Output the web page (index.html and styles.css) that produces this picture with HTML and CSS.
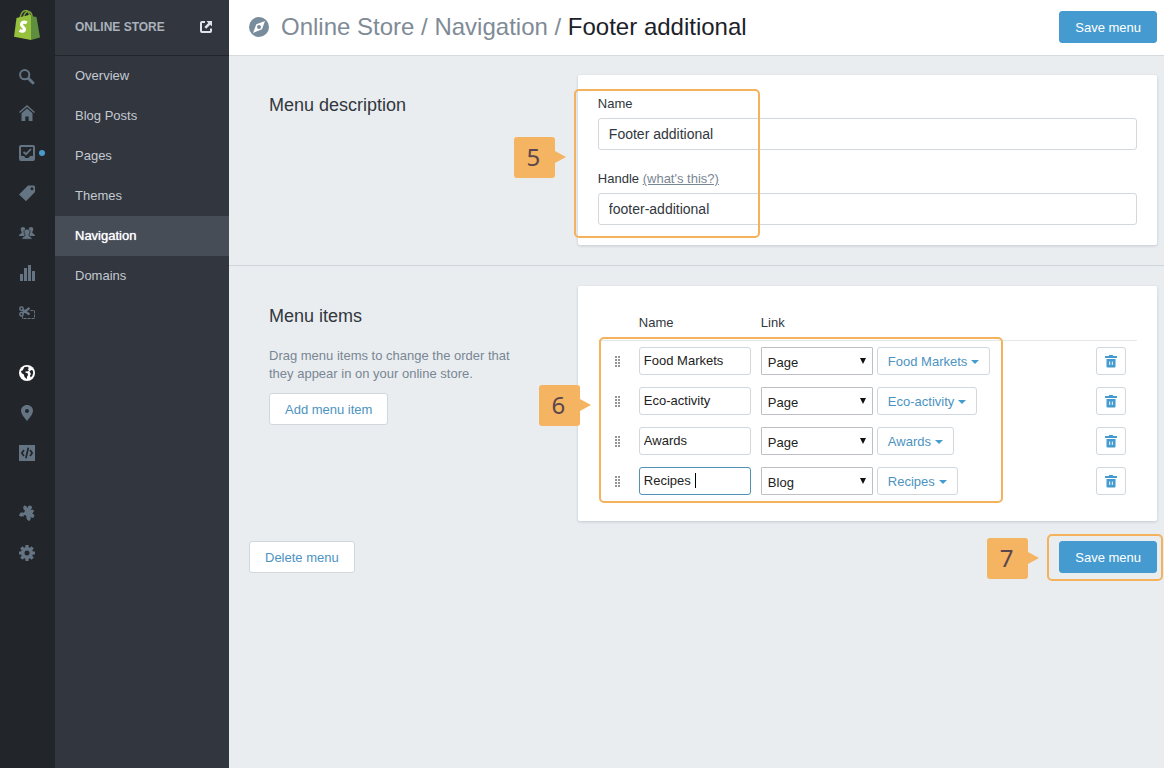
FILE: index.html
```html
<!DOCTYPE html>
<html lang="en">
<head>
<meta charset="utf-8">
<title>Footer additional - Navigation</title>
<link rel="stylesheet" href="styles.css">
</head>
<body>
<svg class="sprites" aria-hidden="true">
  <symbol id="icon-grip" viewBox="0 0 5 11"><path d="M0 0h2v2H0zM3 0h2v2H3zM0 3h2v2H0zM3 3h2v2H3zM0 6h2v2H0zM3 6h2v2H3zM0 9h2v2H0zM3 9h2v2H3z"/></symbol>
  <symbol id="icon-trash" viewBox="0 0 12 13"><path d="M0 1h4V0h4v1h4v2H0zM1.500 4h9v7.500a1 1 0 0 1-1 1h-7a1 1 0 0 1-1-1z"/><path d="M4 6.500h1.200V10H4zM6.800 6.500H8V10H6.800z" fill="#d3e8f5"/></symbol>
</svg>
<div class="app">
  <nav class="rail" aria-label="Main">
    <a class="logo" href="#" aria-label="Home page">
      <svg width="28" height="32" viewBox="0 0 28 32">
        <path d="M7 9C8 4 10.500 1.500 13 1.500c2.500 0 3.500 2.500 3.500 7M10.500 8c1-4 3-5.500 5-5.500S19 5 19 7" fill="none" stroke="#7fa83c" stroke-width="1.400"/>
        <path d="M3.500 9 18 5.500v25.500L1 27.800z" fill="#95c13d"/>
        <path d="M18 5.500l2.500 2 3 .6L27 28.500 18 31z" fill="#5f8e3e"/>
        <path d="M13.800 13.800c-3-1.600-5.300-.5-5.300 1.700 0 2.500 3.300 2.800 3 5-.3 2-2.500 2.200-5 .8" fill="none" stroke="#fff" stroke-width="3.200"/>
      </svg>
    </a>
    <a class="rail-item rail-item-search" href="#" aria-label="Search">
      <svg class="icon" viewBox="0 0 16 16"><circle cx="5.700" cy="5.700" r="4.600" fill="none" stroke="currentColor" stroke-width="2"/><path d="M9 9l5.800 5.800" stroke="currentColor" stroke-width="3"/></svg>
    </a>
    <a class="rail-item" href="#" aria-label="Home">
      <svg class="icon" viewBox="0 0 16 16"><path d="M.5 7.500 8 1l7.500 6.500" fill="none" stroke="currentColor" stroke-width="1.500"/><path d="M2.500 8.300 8 3.600l5.500 4.700V16H9.700v-4.500H6.300V16H2.500z" fill="currentColor"/></svg>
    </a>
    <a class="rail-item" href="#" aria-label="Orders">
      <svg class="icon" viewBox="0 0 16 16"><rect x="1" y="1" width="14" height="14" rx="1" fill="none" stroke="currentColor" stroke-width="2"/><path d="M1 11h4l1.500 2h3L11 11h4v4H1z" fill="currentColor"/><path d="M4.500 7 7 9.200 12 4" fill="none" stroke="currentColor" stroke-width="1.800"/></svg>
      <span class="dot"></span>
    </a>
    <a class="rail-item" href="#" aria-label="Products">
      <svg class="icon" viewBox="0 0 16 16"><path fill-rule="evenodd" d="M9 .5h6l1 1v5.500L7 16.200 0 9.500zM13 2.300a1.500 1.500 0 1 0 0 3 1.500 1.500 0 0 0 0-3z" fill="currentColor"/></svg>
    </a>
    <a class="rail-item" href="#" aria-label="Customers">
      <svg class="icon" viewBox="0 0 16 16"><path d="M1.700 4c0-2.700 4.600-2.700 4.600 0 0 1.500-1 2-.8 3.300L7 9.500 5 11H0c0-2.500 2.700-2 2.700-3.500 0-1.200-1-2-1-3.500zM9.700 4c0-2.700 4.600-2.700 4.600 0 0 1.500-1 2.300-1 3.500 0 1.500 2.700 1 2.700 3.500h-5L9 9.500l1.500-2.200C10.700 6 9.700 5.500 9.700 4z" fill="currentColor"/><path d="M5 6.500c0-3.300 6-3.300 6 0 0 1.700-1.200 2.500-1 4 .3 1.300 3.300 1 3.300 3.800H2.700c0-2.800 3-2.500 3.300-3.800.2-1.500-1-2.300-1-4z" fill="currentColor" stroke="#22252a" stroke-width=".8"/></svg>
    </a>
    <a class="rail-item" href="#" aria-label="Reports">
      <svg class="icon" viewBox="0 0 16 16"><path d="M1 9h3v7H1zM5 3h3v13H5zM9 0h3v16H9zM13 6h3v10h-3z" fill="currentColor"/></svg>
    </a>
    <a class="rail-item" href="#" aria-label="Discounts">
      <svg class="icon" viewBox="0 0 16 16"><g fill="none" stroke="currentColor"><circle cx="2.500" cy="3.800" r="1.700" stroke-width="1.500"/><circle cx="2.500" cy="9.200" r="1.700" stroke-width="1.500"/><path d="M3.500 4.800 10.500 9.500M3.500 8.200l7-5.200" stroke-width="2.300"/><path d="M11.500 5.500h4v8h-12V11" stroke-dasharray="3 1"/></g></svg>
    </a>
    <a class="rail-item rail-item-active rail-group" href="#" aria-label="Online store">
      <svg class="icon" viewBox="0 0 16 16"><circle cx="8" cy="8" r="8" fill="currentColor"/><path d="M5.500 2 9 1.700l.8 1.500L8.700 4.200l1.500 1-2 1.300-1.400-.2-.6 1.200 2.300.8.700 1.700-1 1.300-.5 2.700L5.500 12 4.800 9.500 2.500 8 2 6l1.500-.5zM10.500 6.500l1.700-1.500 1.600.5.400 2.500-1 3-1.700 1.500-.5-2.200 1-1.300z" fill="#22252a"/></svg>
    </a>
    <a class="rail-item" href="#" aria-label="Locations">
      <svg class="icon" viewBox="0 0 16 16"><path fill-rule="evenodd" d="M8 0c3.500 0 6 2.500 6 5.800C14 9 11 12.500 8 16 5 12.500 2 9 2 5.800 2 2.500 4.500 0 8 0zm0 4a2 2 0 1 0 0 4 2 2 0 0 0 0-4z" fill="currentColor"/></svg>
    </a>
    <a class="rail-item" href="#" aria-label="Code">
      <svg class="icon" viewBox="0 0 16 16"><path d="M0 0h16v16H0z" fill="currentColor"/><path d="M5 5 2.800 8 5 11M11 5l2.200 3L11 11M9.300 2.700l-2.400 10.600" fill="none" stroke="#22252a" stroke-width="1.700"/></svg>
    </a>
    <a class="rail-item rail-group" href="#" aria-label="Apps">
      <svg class="icon" viewBox="0 0 16 16"><g transform="rotate(28 8 8)"><path d="M3 3h10v10H3z" fill="currentColor"/><circle cx="8" cy="1.800" r="2" fill="currentColor"/><circle cx="14" cy="8" r="2" fill="currentColor"/><circle cx="3.700" cy="8" r="1.600" fill="#22252a"/><circle cx="8" cy="12.300" r="1.600" fill="#22252a"/><path d="M2 2.500h3v3H2zM11 2.500h2v3h-2zM2 10.500h3v3.500H2zM11 10.500h3v3.500h-3z" fill="currentColor"/></g></svg>
    </a>
    <a class="rail-item" href="#" aria-label="Settings">
      <svg class="icon" viewBox="0 0 16 16"><circle cx="8" cy="8" r="4.300" fill="none" stroke="currentColor" stroke-width="3.600"/><g stroke="currentColor" stroke-width="3.200"><path d="M8 0v3M8 13v3M0 8h3M13 8h3M2.300 2.300l2.200 2.200M11.500 11.500l2.200 2.200M2.300 13.700l2.200-2.200M11.500 4.500l2.200-2.200"/></g></svg>
    </a>
  </nav>

  <nav class="subnav" aria-label="Online store">
    <div class="subnav-head">
      <span>ONLINE STORE</span>
      <a class="external" href="#" aria-label="View online store">
        <svg width="12" height="12" viewBox="0 0 12 12"><path d="M5 1H2a1 1 0 0 0-1 1v8a1 1 0 0 0 1 1h8a1 1 0 0 0 1-1V7.500" fill="none" stroke="currentColor" stroke-width="2"/><path d="M6.500 0H12v5.500L10.200 3.700 6.200 7.700 4.400 5.900l3.900-4z" fill="currentColor"/></svg>
      </a>
    </div>
    <a class="subnav-item" href="#">Overview</a>
    <a class="subnav-item" href="#">Blog Posts</a>
    <a class="subnav-item" href="#">Pages</a>
    <a class="subnav-item" href="#">Themes</a>
    <a class="subnav-item subnav-item-active" href="#" aria-current="page">Navigation</a>
    <a class="subnav-item" href="#">Domains</a>
  </nav>

  <main class="main">
    <header class="topbar">
      <svg class="compass" width="20" height="20" viewBox="0 0 20 20"><circle cx="10" cy="10" r="10" fill="#798c9c"/><path d="M16 4l-3 8.300L4 16l3.300-8.800z" fill="#fff"/><circle cx="10" cy="10" r="2" fill="#798c9c"/></svg>
      <h1 class="crumbs"><a href="#">Online Store</a> / <a href="#">Navigation</a> / <span class="current">Footer additional</span></h1>
      <button class="button button-primary" type="button">Save menu</button>
    </header>

    <section class="section section-ruled">
      <div class="intro">
        <h2>Menu description</h2>
      </div>
      <div class="card">
        <div class="field">
          <label for="menu-name">Name</label>
          <input class="text-input" id="menu-name" type="text" value="Footer additional">
        </div>
        <div class="field">
          <div class="label-row"><label for="menu-handle">Handle</label> <a class="help" href="#">(what's this?)</a></div>
          <input class="text-input" id="menu-handle" type="text" value="footer-additional">
        </div>
        <div class="mark mark-description"><span class="badge">5</span></div>
      </div>
    </section>

    <section class="section">
      <div class="intro">
        <h2>Menu items</h2>
        <p>Drag menu items to change the order that they appear in on your online store.</p>
        <button class="button" type="button">Add menu item</button>
      </div>
      <div class="card">
        <table class="items">
          <thead>
            <tr><th class="col-grip"></th><th class="col-name">Name</th><th>Link</th><th class="col-delete"></th></tr>
          </thead>
          <tbody>
            <tr>
              <td><svg class="grip"><use href="#icon-grip"/></svg></td>
              <td><input class="item-input" type="text" aria-label="Item 1 name" value="Food Markets"></td>
              <td><div class="link-cell"><span class="select"><select aria-label="Item 1 link type"><option>Page</option><option>Blog</option></select></span><button class="picker" type="button">Food Markets<span class="caret"></span></button></div></td>
              <td><button class="delete" type="button" aria-label="Delete Food Markets"><svg class="trash"><use href="#icon-trash"/></svg></button></td>
            </tr>
            <tr>
              <td><svg class="grip"><use href="#icon-grip"/></svg></td>
              <td><input class="item-input" type="text" aria-label="Item 2 name" value="Eco-activity"></td>
              <td><div class="link-cell"><span class="select"><select aria-label="Item 2 link type"><option>Page</option><option>Blog</option></select></span><button class="picker" type="button">Eco-activity<span class="caret"></span></button></div></td>
              <td><button class="delete" type="button" aria-label="Delete Eco-activity"><svg class="trash"><use href="#icon-trash"/></svg></button></td>
            </tr>
            <tr>
              <td><svg class="grip"><use href="#icon-grip"/></svg></td>
              <td><input class="item-input" type="text" aria-label="Item 3 name" value="Awards"></td>
              <td><div class="link-cell"><span class="select"><select aria-label="Item 3 link type"><option>Page</option><option>Blog</option></select></span><button class="picker" type="button">Awards<span class="caret"></span></button></div></td>
              <td><button class="delete" type="button" aria-label="Delete Awards"><svg class="trash"><use href="#icon-trash"/></svg></button></td>
            </tr>
            <tr>
              <td><svg class="grip"><use href="#icon-grip"/></svg></td>
              <td><div class="editing"><input class="item-input item-input-active" type="text" aria-label="Item 4 name" value="Recipes "><span class="text-cursor"></span></div></td>
              <td><div class="link-cell"><span class="select"><select aria-label="Item 4 link type"><option>Page</option><option selected>Blog</option></select></span><button class="picker" type="button">Recipes<span class="caret"></span></button></div></td>
              <td><button class="delete" type="button" aria-label="Delete Recipes"><svg class="trash"><use href="#icon-trash"/></svg></button></td>
            </tr>
          </tbody>
        </table>
        <div class="mark mark-items"><span class="badge">6</span></div>
      </div>
    </section>

    <footer class="actions">
      <button class="button" type="button">Delete menu</button>
      <div class="save">
        <button class="button button-primary" type="button">Save menu</button>
        <div class="mark mark-save"><span class="badge">7</span></div>
      </div>
    </footer>
  </main>
</div>
</body>
</html>
```
FILE: styles.css
```css
* { box-sizing: border-box; }

body {
  margin: 0;
  font: 13px/18px "Liberation Sans", Arial, sans-serif;
  color: #31373d;
  background: #e9edf0;
}

a { color: inherit; text-decoration: none; }
button, input, select { font: inherit; margin: 0; }
h1, h2, p { margin: 0; font-weight: normal; }

.sprites { position: absolute; width: 0; height: 0; }
.app { display: flex; min-height: 100vh; }

/* Icon rail */
.rail {
  flex: none;
  width: 55px;
  background: linear-gradient(to right, #22252a 44px, #20252d);
}
.logo { display: flex; justify-content: center; height: 59px; padding: 9px 1px 0 0; }
.rail-item {
  position: relative;
  display: flex;
  align-items: center;
  justify-content: center;
  height: 40px;
  padding-right: 1px;
  color: #647482;
}
.rail-item-search { height: 34px; padding-top: 2px; }
.rail-item-active { color: #fff; }
.rail-group { margin-top: 20px; }
.icon { width: 16px; height: 16px; }
.dot {
  position: absolute;
  top: 17px;
  left: 39px;
  width: 6px;
  height: 6px;
  border-radius: 50%;
  background: #479ccf;
}

/* Section menu */
.subnav { flex: none; width: 174px; background: #32363e; color: #c3cad2; }
.subnav-head {
  display: flex;
  align-items: center;
  justify-content: space-between;
  height: 56px;
  padding: 0 17px 2px 20px;
  border-bottom: 1px solid #22252b;
  font-size: 12px;
  font-weight: bold;
  color: #a9b2bb;
}
.external { display: flex; color: #dfe5ea; }
.subnav-item { display: block; padding: 11px 20px; }
.subnav-item-active {
  background: #464d57;
  color: #fff;
  text-shadow: 0 0 1px #fff;
}

/* Page */
.main { flex: 1; min-width: 0; }
.topbar {
  display: flex;
  align-items: center;
  gap: 12px;
  height: 56px;
  padding: 0 7px 2px 20px;
  background: #fff;
  border-bottom: 1px solid #d5dade;
}
.compass { flex: none; }
.crumbs { flex: 1; font-size: 24px; line-height: 30px; color: #7f8b96; }
.current { color: #1c2228; }

.section {
  display: grid;
  grid-template-columns: 8fr 15fr;
  padding: 20px 7px 20px 40px;
}
.section-ruled { padding-top: 19px; border-bottom: 1px solid #cfd5da; }
.intro { padding: 19px 60px 0 0; }
h2 { font-size: 18px; line-height: 22px; }
.intro p { margin: 20px 0 10px; color: #798693; }

.card {
  position: relative;
  padding: 20px;
  background: #fff;
  border-radius: 2px;
  box-shadow: 0 1px 3px rgba(50, 65, 80, .2);
}
.field + .field { margin-top: 20px; }
.field label { line-height: 18px; }
.help { color: #798693; text-decoration: underline; }
.text-input {
  display: block;
  width: 100%;
  height: 32px;
  margin-top: 5px;
  padding: 0 10px;
  border: 1px solid #d3d8dc;
  border-radius: 3px;
  font-size: 14px;
  color: #31373d;
}

.button {
  height: 32px;
  padding: 2px 15px 0;
  border: 1px solid #d0d7dd;
  border-radius: 3px;
  background: #fff;
  color: #4c93c2;
}
.button-primary { border-color: #459bcf; background: #459bcf; color: #fff; }

/* Menu item table */
.items { width: 100%; border-collapse: separate; border-spacing: 0; table-layout: fixed; }
.items th {
  height: 35px;
  padding: 0 0 1px;
  border-bottom: 1px solid #e4e8eb;
  font-weight: normal;
  text-align: left;
}
.items td { height: 40px; padding: 0; }
.col-grip { width: 41px; }
.col-name { width: 122px; }
.col-delete { width: 41px; }
.grip { display: block; width: 5px; height: 11px; margin-left: 17px; fill: #959595; }
.item-input {
  display: block;
  width: 112px;
  height: 28px;
  padding: 0 4px 2px;
  border: 1px solid #d0d7dd;
  border-radius: 3px;
  color: #222;
}
.item-input-active { border-color: #4f92b5; }
.editing { position: relative; }
.text-cursor {
  position: absolute;
  top: 6px;
  left: 56px;
  width: 1px;
  height: 15px;
  background: #000;
}
.link-cell { display: flex; gap: 4px; }
.select { position: relative; }
.select select {
  appearance: none;
  display: block;
  width: 112px;
  height: 28px;
  padding: 3px 20px 0 6px;
  border: 1px solid #bcc0c4;
  border-radius: 1px;
  background: #fff;
  color: #222;
}
.select::after {
  content: "";
  position: absolute;
  top: 11px;
  right: 7px;
  border: solid transparent;
  border-width: 6px 3px 0;
  border-top-color: #111;
  pointer-events: none;
}
.picker {
  display: flex;
  align-items: center;
  gap: 4px;
  height: 28px;
  padding: 1px 10px 0;
  border: 1px solid #d0d7dd;
  border-radius: 3px;
  background: #fff;
  color: #4c93c2;
}
.caret { border: solid transparent; border-width: 4px 4px 0; border-top-color: #479ccf; }
.delete {
  display: flex;
  align-items: center;
  justify-content: center;
  width: 30px;
  height: 28px;
  padding: 0;
  border: 1px solid #d0d7dd;
  border-radius: 3px;
  background: #fff;
}
.trash { width: 12px; height: 13px; fill: #459bcf; }

.actions {
  display: flex;
  justify-content: space-between;
  padding: 0 7px 20px 20px;
}
.save { position: relative; }

/* Tutorial annotations laid over the page */
.mark {
  position: absolute;
  border: 2px solid #f4b25c;
  border-radius: 5px;
  pointer-events: none;
}
.mark-description { top: 14px; left: -4px; width: 186px; height: 149px; }
.mark-items { top: 51px; left: 21px; width: 404px; height: 166px; }
.mark-save { top: -7px; left: -12px; width: 116px; height: 47px; }
.badge {
  position: absolute;
  top: 46px;
  left: -62px;
  width: 41px;
  height: 41px;
  padding-right: 2px;
  border-radius: 3px;
  background: #f4b461;
  color: #5a464c;
  font: 24px/39px "Noto Sans", "Open Sans", sans-serif;
  text-align: center;
}
.mark-save .badge { top: 2px; }
.badge::after {
  content: "";
  position: absolute;
  top: 14px;
  left: 100%;
  border: solid transparent;
  border-width: 6px 0 6px 11px;
  border-left-color: #f4b461;
}
```
